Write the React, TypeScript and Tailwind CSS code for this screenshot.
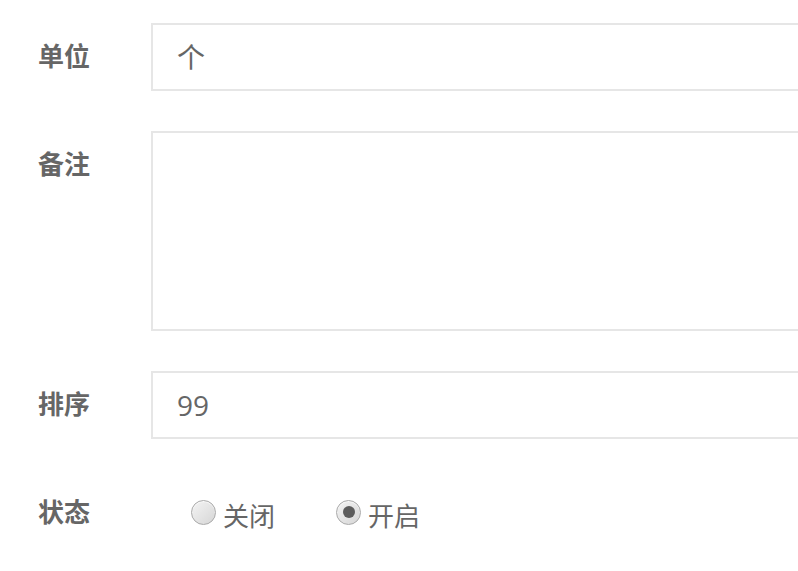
import React from "react";

const font = { fontFamily: '"Open Sans", "Noto Sans CJK SC", sans-serif' };

function Label({ children }: { children: React.ReactNode }) {
  return (
    <div className="w-[151px] shrink-0 pl-[38px] pt-[16px] text-[26px] leading-[35px] font-bold text-[#666]">
      {children}
    </div>
  );
}

function Radio({ checked, label }: { checked?: boolean; label: string }) {
  return (
    <div className="flex items-center">
      <div className="w-[25px] h-[25px] rounded-full border border-[#a9a9a9] bg-gradient-to-br from-[#f4f4f4] to-[#d6d6d6] flex items-center justify-center shadow-[inset_0_1px_1px_rgba(255,255,255,0.8)]">
        {checked && <div className="w-[12px] h-[12px] rounded-full bg-[#5c5c5c]" />}
      </div>
      <span className="ml-[7px] mt-[8px] text-[26px] leading-[30px] text-[#666]">{label}</span>
    </div>
  );
}

export default function App() {
  return (
    <div className="w-[798px] h-[571px] overflow-hidden bg-white pt-[23px]" style={font}>
      <div className="flex mb-[40px]">
        <Label>单位</Label>
        <div className="w-[720px] h-[68px] shrink-0 border-2 border-[#e6e6e6] pl-[24px] text-[28px] leading-[64px] text-[#666]">
          个
        </div>
      </div>
      <div className="flex mb-[40px]">
        <Label>备注</Label>
        <div className="w-[720px] h-[200px] shrink-0 border-2 border-[#e6e6e6]" />
      </div>
      <div className="flex mb-[40px]">
        <Label>排序</Label>
        <div className="w-[720px] h-[68px] shrink-0 border-2 border-[#e6e6e6] pl-[24px] text-[28px] leading-[64px] text-[#666]">
          99
        </div>
      </div>
      <div className="flex">
        <Label>状态</Label>
        <div className="flex pl-[40px] pt-[14px] gap-[61px]">
          <Radio label="关闭" />
          <Radio checked label="开启" />
        </div>
      </div>
    </div>
  );
}
